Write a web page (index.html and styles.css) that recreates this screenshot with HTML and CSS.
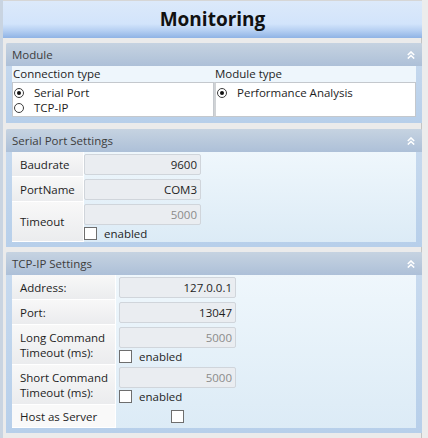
FILE: index.html
```html
<!DOCTYPE html>
<html lang="en">
<head>
    <meta charset="UTF-8">
    <title>Monitoring</title>
    <link rel="stylesheet" href="styles.css">
</head>
<body>
    <div class="window">
        <div class="title">Monitoring</div>

        <div class="content">
            <!-- Module -->
            <section class="panel">
                <div class="panel-header">
                    <span>Module</span>
                    <svg class="collapse" width="8" height="8" viewBox="0 0 8 8"><polyline points="0.8,4 4,1 7.2,4"/><polyline points="0.8,7.5 4,4.5 7.2,7.5"/></svg>
                </div>
                <div class="panel-body module-body">
                    <div class="group">
                        <div class="group-title">Connection type</div>
                        <div class="group-box">
                            <div class="radio checked"><span class="dot"></span>Serial Port</div>
                            <div class="radio"><span class="dot"></span>TCP-IP</div>
                        </div>
                    </div>
                    <div class="group">
                        <div class="group-title">Module type</div>
                        <div class="group-box">
                            <div class="radio checked"><span class="dot"></span>Performance Analysis</div>
                        </div>
                    </div>
                </div>
            </section>

            <!-- Serial Port -->
            <section class="panel">
                <div class="panel-header">
                    <span>Serial Port Settings</span>
                    <svg class="collapse" width="8" height="8" viewBox="0 0 8 8"><polyline points="0.8,4 4,1 7.2,4"/><polyline points="0.8,7.5 4,4.5 7.2,7.5"/></svg>
                </div>
                <div class="panel-body">
                    <div class="settings serial">
                        <div class="row">
                            <div class="label">Baudrate</div>
                            <div class="value"><div class="field">9600</div></div>
                        </div>
                        <div class="row">
                            <div class="label">PortName</div>
                            <div class="value"><div class="field">COM3</div></div>
                        </div>
                        <div class="row">
                            <div class="label">Timeout</div>
                            <div class="value">
                                <div class="field disabled">5000</div>
                                <div class="check"><span class="box"></span>enabled</div>
                            </div>
                        </div>
                    </div>
                </div>
            </section>

            <!-- TCP-IP -->
            <section class="panel">
                <div class="panel-header">
                    <span>TCP-IP Settings</span>
                    <svg class="collapse" width="8" height="8" viewBox="0 0 8 8"><polyline points="0.8,4 4,1 7.2,4"/><polyline points="0.8,7.5 4,4.5 7.2,7.5"/></svg>
                </div>
                <div class="panel-body">
                    <div class="settings tcp">
                        <div class="row">
                            <div class="label">Address:</div>
                            <div class="value"><div class="field">127.0.0.1</div></div>
                        </div>
                        <div class="row">
                            <div class="label">Port:</div>
                            <div class="value"><div class="field">13047</div></div>
                        </div>
                        <div class="row">
                            <div class="label">Long Command<br>Timeout (ms):</div>
                            <div class="value">
                                <div class="field disabled">5000</div>
                                <div class="check"><span class="box"></span>enabled</div>
                            </div>
                        </div>
                        <div class="row">
                            <div class="label">Short Command<br>Timeout (ms):</div>
                            <div class="value">
                                <div class="field disabled">5000</div>
                                <div class="check"><span class="box"></span>enabled</div>
                            </div>
                        </div>
                        <div class="row host">
                            <div class="label">Host as Server</div>
                            <div class="value center"><span class="box"></span></div>
                        </div>
                    </div>
                </div>
            </section>
        </div>
    </div>
</body>
</html>
```

FILE: styles.css
```css
/* Base */
* {
    margin: 0;
    padding: 0;
    box-sizing: border-box;
}

body {
    background: #e9e9e9;
    font-family: "Open Sans", "Noto Sans", sans-serif;
    font-size: 11.5px;
    color: #1e1e1e;
}

/* Janela */
.window {
    width: 428px;
    height: 438px;
    overflow: hidden;
    border-left: 3px solid #c9d4e1;
    border-right: 6px solid #ececec;
    box-shadow: inset -1px 0 0 #c4c4c4;
    background: #ebebeb;
}

.title {
    height: 38px;
    border-top: 1px solid #d6d6d6;
    background: linear-gradient(to bottom, #dce9fa 0%, #d2e4fb 62%, #b5cff2 80%, #8fb3e5 100%);
    text-align: center;
    font-size: 19px;
    font-weight: 700;
    color: #111;
    line-height: 36px;
}

.content {
    padding: 5px 0 0 3px;
}

/* Paineis */
.panel {
    background: linear-gradient(to bottom, #c9dbef, #b7cfea);
    border-radius: 2px 2px 0 0;
    margin-bottom: 6px;
}

.panel + .panel + .panel {
    margin-top: -1px;
}

.panel-header {
    height: 23px;
    padding: 0 7px 0 6px;
    display: flex;
    align-items: center;
    justify-content: space-between;
    background: linear-gradient(to bottom, #c6d3e1, #adc0d8);
    color: #3d3d3d;
    border-radius: 2px 2px 0 0;
}

.collapse polyline {
    fill: none;
    stroke: #fff;
    stroke-width: 1.6;
}

.panel-body {
    padding: 0 6px 5px 6px;
}

/* Module */
.module-body {
    display: grid;
    grid-template-columns: 202px 202px;
    padding-bottom: 6px;
}

.group-title {
    height: 16px;
    line-height: 16px;
    background: #eef6fc;
    color: #1e1e1e;
    padding-left: 1px;
}

.group-box {
    height: 35px;
    background: #fff;
    border: 1px solid #c4c8cd;
    padding-top: 2px;
}

.group + .group .group-box {
    border-left-width: 2px;
    border-left-color: #d0d3d6;
}

.radio {
    display: flex;
    align-items: center;
    height: 15px;
}

.radio .dot {
    width: 10px;
    height: 10px;
    border: 1px solid #3c3c3c;
    border-radius: 50%;
    margin: 0 10px 0 1px;
    display: flex;
    align-items: center;
    justify-content: center;
    background: #fff;
}

.radio.checked .dot::after {
    content: "";
    width: 4px;
    height: 4px;
    border-radius: 50%;
    background: #111;
}

/* Tabelas de configuracao */
.settings {
    background: linear-gradient(to bottom, #eff7fc, #dcebf6);
}

.row {
    display: flex;
}

.label {
    padding-left: 8px;
    display: flex;
    align-items: center;
    background: linear-gradient(to bottom, #f8f8f8, #ebecee);
    border-bottom: 1px solid #fff;
    border-right: 1px solid #fff;
    line-height: 15px;
}

.host .label {
    background: #f9f9f9;
}

.serial .label {
    width: 72px;
}

.tcp .label {
    width: 104px;
}

.value {
    padding: 2px 0 2px 0;
}

.tcp .value {
    padding-left: 3px;
}

.value.center {
    width: 120px;
    display: flex;
    align-items: center;
    justify-content: center;
    padding-top: 5px;
    padding-bottom: 5px;
}

.field {
    width: 117px;
    height: 21px;
    border: 1px solid #d0d5db;
    border-radius: 2px;
    background: #eaedf1;
    text-align: right;
    padding-right: 3px;
    line-height: 19px;
    color: #1e1e1e;
}

.field.disabled {
    color: #8b8b8b;
}

.check {
    display: flex;
    align-items: center;
    margin-top: 2px;
    height: 13px;
}

.box {
    display: inline-block;
    width: 13px;
    height: 13px;
    border: 1px solid #6e6e6e;
    background: #fff;
}

.check .box {
    margin-right: 7px;
}
```
